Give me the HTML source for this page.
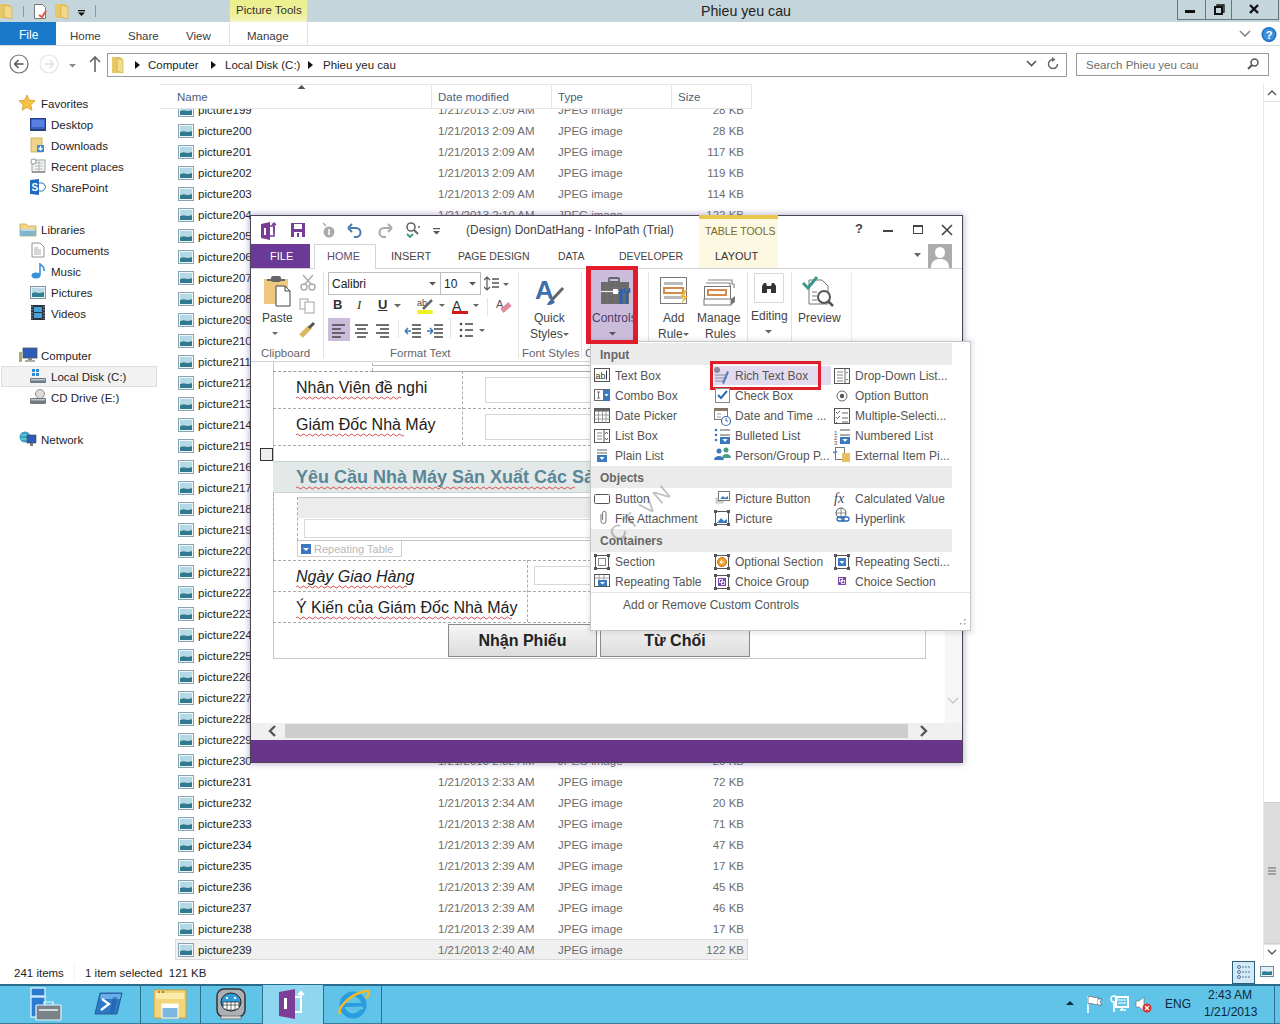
<!DOCTYPE html>
<html><head><meta charset="utf-8">
<style>
*{margin:0;padding:0;box-sizing:border-box}
html,body{width:1280px;height:1024px;overflow:hidden;background:#fff;font-family:"Liberation Sans",sans-serif;font-size:11.5px;color:#1e1e1e}
.a{position:absolute}
.t{position:absolute;white-space:nowrap;line-height:14px}
.row .n{position:absolute;left:198px}
.ico{position:absolute}
</style></head><body>

<!-- title bar -->
<div class="a" style="left:0;top:0;width:1280px;height:22px;background:#c5d5dc"></div>
<!-- QAT icons -->
<svg class="a" style="left:0;top:0" width="100" height="22">
 <path d="M-2 4h10l3 2v12h-13z" fill="#e6c867"/><path d="M4 5l8 2v12l-8-2z" fill="#f2d98a" stroke="#c9a544" stroke-width=".6"/>
 <rect x="23" y="6" width="1" height="11" fill="#8b9aa0"/>
 <path d="M34.5 4.5h8l3 3v11h-11z" fill="#fff" stroke="#777"/><path d="M39 15l3 2 4-6" stroke="#e0583e" stroke-width="2" fill="none"/>
 <path d="M55 4h10l3 2v12h-13z" fill="#e6c867"/><path d="M61 5l7 2v12l-7-2z" fill="#f2d98a" stroke="#c9a544" stroke-width=".6"/>
 <rect x="78" y="10" width="7" height="1.3" fill="#111"/><path d="M78 12.5h7l-3.5 3.5z" fill="#111"/>
 <rect x="95" y="5" width="1" height="12" fill="#8b9aa0"/>
</svg>
<div class="a" style="left:229px;top:0;width:79px;height:22px;background:linear-gradient(#ecef8c,#eef19c 70%,#f3f5c8);border-left:1px solid #d8de9a;border-right:1px solid #d8de9a"></div>
<div class="t" style="left:236px;top:3px;font-size:11.5px;color:#333">Picture Tools</div>
<div class="t" style="left:701px;top:3px;font-size:14.2px;line-height:17px;color:#222">Phieu yeu cau</div>
<!-- window buttons -->
<div class="a" style="left:1177px;top:0;width:102px;height:20px;border:1px solid #66767c;border-top:none;background:#c5d5dc"></div>
<div class="a" style="left:1205px;top:0;width:1px;height:20px;background:#66767c"></div>
<div class="a" style="left:1231px;top:0;width:1px;height:20px;background:#66767c"></div>
<div class="a" style="left:1185px;top:10px;width:10px;height:3px;background:#111"></div>
<svg class="a" style="left:1208px;top:2px" width="22" height="16"><rect x="7" y="5" width="7" height="7" fill="none" stroke="#111" stroke-width="2"/><path d="M9 4V3h7v7h-1" fill="none" stroke="#111" stroke-width="1.3"/></svg>
<svg class="a" style="left:1248px;top:3px" width="20" height="14"><path d="M2 2l8 8M10 2l-8 8" stroke="#111" stroke-width="2.4"/></svg>
<!-- ribbon tab row -->
<div class="a" style="left:0;top:22px;width:1280px;height:24px;background:#fff;border-bottom:1px solid #dadbdc"></div>
<div class="a" style="left:0;top:22px;width:56px;height:23px;background:#1979ca"></div>
<div class="t" style="left:19px;top:28px;font-size:12px;color:#fff">File</div>
<div class="t" style="left:70px;top:29px;color:#3c3c3c">Home</div>
<div class="t" style="left:128px;top:29px;color:#3c3c3c">Share</div>
<div class="t" style="left:186px;top:29px;color:#3c3c3c">View</div>
<div class="a" style="left:229px;top:22px;width:1px;height:23px;background:#e4e4d0"></div>
<div class="a" style="left:307px;top:22px;width:1px;height:23px;background:#e4e4d0"></div>
<div class="t" style="left:247px;top:29px;color:#3c3c3c">Manage</div>
<svg class="a" style="left:1238px;top:28px" width="16" height="12"><path d="M2 3l5 5 5-5" fill="none" stroke="#888" stroke-width="1.6"/></svg>
<svg class="a" style="left:1260px;top:26px" width="18" height="18"><circle cx="9" cy="8.5" r="7.5" fill="#1f6fc1"/><circle cx="9" cy="8.5" r="6" fill="#3c8fdc"/><text x="9" y="13" font-size="11" font-weight="bold" fill="#fff" text-anchor="middle" font-family="Liberation Sans">?</text></svg>
<!-- nav row -->
<svg class="a" style="left:0;top:46px" width="106" height="38">
 <circle cx="19" cy="18" r="9" fill="none" stroke="#707070" stroke-width="1.2"/>
 <path d="M14.5 18h9M14.5 18l4-4M14.5 18l4 4" stroke="#555" stroke-width="1.5" fill="none"/>
 <circle cx="49" cy="18" r="9" fill="none" stroke="#e2e2e2" stroke-width="1.2"/>
 <path d="M44.5 18h9M53.5 18l-4-4M53.5 18l-4 4" stroke="#e0e0e0" stroke-width="1.5" fill="none"/>
 <path d="M69 18h7l-3.5 3.5z" fill="#888"/>
 <path d="M95 26V11M90 16l5-5 5 5" stroke="#666" stroke-width="1.6" fill="none"/>
</svg>
<div class="a" style="left:107px;top:53px;width:960px;height:24px;border:1px solid #9a9a9a;background:#fff"></div>
<svg class="a" style="left:110px;top:55px" width="20" height="20"><path d="M2 2h8l3 2v14h-11z" fill="#e6c867"/><path d="M7 3l6 2v13l-6-2z" fill="#f3dc8e" stroke="#caa64a" stroke-width=".6"/></svg>
<svg class="a" style="left:134px;top:60px" width="8" height="10"><path d="M1 1l5 4-5 4z" fill="#111"/></svg>
<div class="t" style="left:148px;top:58px;color:#1e1e1e">Computer</div>
<svg class="a" style="left:210px;top:60px" width="8" height="10"><path d="M1 1l5 4-5 4z" fill="#111"/></svg>
<div class="t" style="left:225px;top:58px;color:#1e1e1e">Local Disk (C:)</div>
<svg class="a" style="left:307px;top:60px" width="8" height="10"><path d="M1 1l5 4-5 4z" fill="#111"/></svg>
<div class="t" style="left:323px;top:58px;color:#1e1e1e">Phieu yeu cau</div>
<svg class="a" style="left:1025px;top:58px" width="14" height="12"><path d="M2 3l4.5 4.5L11 3" fill="none" stroke="#555" stroke-width="1.6"/></svg>
<svg class="a" style="left:1045px;top:56px" width="16" height="16"><path d="M12.5 8A4.5 4.5 0 1 1 8 3.5" fill="none" stroke="#666" stroke-width="1.5"/><path d="M7 1l3.5 2.5L7 6z" fill="#666"/></svg>
<div class="a" style="left:1076px;top:53px;width:193px;height:23px;border:1px solid #9a9a9a;background:#fff"></div>
<div class="t" style="left:1086px;top:58px;color:#6d6d6d">Search Phieu yeu cau</div>
<svg class="a" style="left:1246px;top:57px" width="14" height="14"><circle cx="8.5" cy="5.5" r="3.5" fill="none" stroke="#555" stroke-width="1.5"/><path d="M6 8l-4 4" stroke="#555" stroke-width="2"/></svg>
<!-- nav pane -->
<svg class="a" style="left:18px;top:94px" width="20" height="20"><path d="M9 1l2.4 5.2 5.6.6-4.2 3.8 1.2 5.6L9 13.3l-5 2.9 1.2-5.6L1 6.8l5.6-.6z" fill="#f5c242" stroke="#d49a2a" stroke-width=".8"/></svg>
<div class="t" style="left:41px;top:97px">Favorites</div>
<svg class="a" style="left:30px;top:118px" width="16" height="14"><rect x="0.5" y="0.5" width="15" height="11" fill="#3d63c8" stroke="#1f3d8c"/><rect x="2" y="2" width="12" height="7" fill="#5880e0"/><rect x="0" y="11" width="16" height="2" fill="#26407a"/></svg>
<div class="t" style="left:51px;top:118px">Desktop</div>
<svg class="a" style="left:30px;top:137px" width="16" height="16"><rect x="1" y="1" width="11" height="14" fill="#eed58a" stroke="#c9a949" stroke-width=".8"/><path d="M7 8h7v7H7z" fill="#3a8bd4"/><path d="M10.5 9v4M8.5 11l2 2 2-2" stroke="#fff" stroke-width="1.2" fill="none"/></svg>
<div class="t" style="left:51px;top:139px">Downloads</div>
<svg class="a" style="left:30px;top:158px" width="16" height="16"><rect x="2" y="2" width="13" height="12" fill="#f4f4f4" stroke="#8b8b8b" stroke-width=".8"/><path d="M5 5h8M5 8h8M5 11h8M9 3v10" stroke="#9aa" stroke-width=".7"/><circle cx="3.5" cy="3.5" r="2.6" fill="#fff" stroke="#777" stroke-width=".8"/><rect x="2" y="13" width="13" height="2" fill="#999"/></svg>
<div class="t" style="left:51px;top:160px">Recent places</div>
<svg class="a" style="left:30px;top:179px" width="16" height="16"><path d="M0 1l9-1v16l-9-1z" fill="#1d6bbd"/><path d="M9 4h4l3 4-3 4H9" fill="#fff" stroke="#2b78c2" stroke-width="1"/><text x="1.5" y="12" font-size="10" font-weight="bold" fill="#fff" font-family="Liberation Sans">S</text></svg>
<div class="t" style="left:51px;top:181px">SharePoint</div>
<svg class="a" style="left:19px;top:221px" width="18" height="16"><path d="M1 3h6l2 2h8v10H1z" fill="#f3d488" stroke="#c9a949" stroke-width=".8"/><path d="M1 8h16v7H1z" fill="#80b4c8"/><path d="M2 9h14" stroke="#fff" stroke-width="1"/></svg>
<div class="t" style="left:41px;top:223px">Libraries</div>
<svg class="a" style="left:31px;top:242px" width="14" height="16"><path d="M1 1h8l4 4v10H1z" fill="#fff" stroke="#888" stroke-width=".9"/><path d="M3 6h4M3 8h7M3 10h7M3 12h7" stroke="#9a9a9a" stroke-width=".8"/></svg>
<div class="t" style="left:51px;top:244px">Documents</div>
<svg class="a" style="left:30px;top:263px" width="16" height="16"><ellipse cx="6" cy="12.5" rx="4.5" ry="3" fill="#3b8fd8"/><path d="M10 12V1c2 2 5 3 4 7" stroke="#3b8fd8" stroke-width="1.6" fill="none"/></svg>
<div class="t" style="left:51px;top:265px">Music</div>
<svg class="a" style="left:30px;top:286px" width="16" height="14"><rect x=".5" y=".5" width="15" height="12" fill="#e8f2f6" stroke="#7c98a8"/><path d="M2 11V7c3-2 6 1 12-1v5z" fill="#2f7f95"/><rect x="2" y="2" width="12" height="4" fill="#b9dbe8"/></svg>
<div class="t" style="left:51px;top:286px">Pictures</div>
<svg class="a" style="left:31px;top:305px" width="14" height="16"><rect x="0" y="0" width="14" height="15" fill="#2b3340"/><rect x="3" y="2" width="8" height="5" fill="#4aa0d8"/><rect x="3" y="8" width="8" height="5" fill="#4aa0d8"/><path d="M1 1v13M13 1v13" stroke="#aaa" stroke-width="1" stroke-dasharray="1.5 1.5"/></svg>
<div class="t" style="left:51px;top:307px">Videos</div>
<svg class="a" style="left:19px;top:347px" width="20" height="16"><rect x="4" y="1" width="14" height="10" fill="#2a5cb8" stroke="#555" stroke-width=".8"/><rect x="9" y="11" width="4" height="2" fill="#888"/><rect x="6" y="13" width="10" height="2" fill="#aaa"/><rect x="0" y="5" width="3" height="10" fill="#9fb26a"/></svg>
<div class="t" style="left:41px;top:349px">Computer</div>
<div class="a" style="left:1px;top:366px;width:156px;height:21px;background:#f2f2f2;border:1px solid #dedede"></div>
<svg class="a" style="left:30px;top:368px" width="16" height="16"><rect x="2" y="1" width="3" height="3" fill="#2f8ad0"/><rect x="6" y="1" width="3" height="3" fill="#2f8ad0"/><rect x="2" y="5" width="3" height="3" fill="#2f8ad0"/><rect x="6" y="5" width="3" height="3" fill="#2f8ad0"/><rect x="0" y="10" width="16" height="5" rx="1" fill="#6d7b86"/><rect x="1" y="11" width="14" height="1.5" fill="#bcc6cc"/></svg>
<div class="t" style="left:51px;top:370px">Local Disk (C:)</div>
<svg class="a" style="left:30px;top:389px" width="16" height="16"><circle cx="10" cy="5" r="4.5" fill="#ddd" stroke="#777" stroke-width=".8"/><rect x="0" y="9" width="16" height="6" rx="1" fill="#707a80"/><rect x="1" y="10" width="14" height="1.5" fill="#c0c6ca"/></svg>
<div class="t" style="left:51px;top:391px">CD Drive (E:)</div>
<svg class="a" style="left:19px;top:431px" width="20" height="16"><circle cx="6" cy="6" r="5.5" fill="#3aa0c8"/><path d="M2 4h8M2 8h8" stroke="#8fd" stroke-width=".8"/><rect x="8" y="4" width="9" height="8" fill="#2a5cb8" stroke="#444" stroke-width=".6"/><rect x="11" y="12" width="3" height="3" fill="#777"/></svg>
<div class="t" style="left:41px;top:433px">Network</div>
<!-- vscroll -->
<div class="a" style="left:1263px;top:84px;width:17px;height:876px;background:#fff;border-left:1px solid #e8e8e8"></div>
<svg class="a" style="left:1264px;top:86px" width="16" height="14"><path d="M4 9l4-4 4 4" fill="none" stroke="#555" stroke-width="1.4"/></svg>
<div class="a" style="left:1264px;top:101px;width:16px;height:1px;background:#e2e2e2"></div>
<div class="a" style="left:1264px;top:802px;width:16px;height:142px;background:#dcdcdc;border-top:1px solid #cfcfcf;border-bottom:1px solid #cfcfcf"></div>
<svg class="a" style="left:1264px;top:866px" width="16" height="12"><path d="M4 2h8M4 5h8M4 8h8" stroke="#666" stroke-width="1.2"/></svg>
<div class="a" style="left:1264px;top:944px;width:16px;height:1px;background:#e2e2e2"></div>
<svg class="a" style="left:1264px;top:944px" width="16" height="16"><path d="M4 6l4 4 4-4" fill="none" stroke="#555" stroke-width="1.4"/></svg>
<!-- status bar -->
<div class="t" style="left:14px;top:966px;color:#1e1e1e">241 items</div>
<div class="a" style="left:74px;top:964px;width:1px;height:16px;background:#f2f2f2"></div>
<div class="t" style="left:85px;top:966px;color:#1e1e1e">1 item selected&nbsp; 121 KB</div>
<div class="a" style="left:1232px;top:961px;width:23px;height:23px;background:#d3e9f8;border:1px solid #2f607c"></div>
<svg class="a" style="left:1234px;top:963px" width="20" height="18"><g stroke="#5a7896" stroke-width="1" fill="none"><circle cx="5" cy="4" r="1.5"/><circle cx="5" cy="9" r="1.5"/><circle cx="5" cy="14" r="1.5"/></g><path d="M8 4h9M8 9h9M8 14h9" stroke="#5a7896" stroke-width="1" stroke-dasharray="2 1"/></svg>
<svg class="a" style="left:1258px;top:964px" width="18" height="16"><rect x="2.5" y="2.5" width="13" height="10" fill="#e4f0f6" stroke="#6f8a9a"/><path d="M4 11V8c3-2 6 1 10-1v4z" fill="#2d7d94"/></svg>

<svg class="a" style="left:178px;top:103px" width="16" height="14"><rect x=".5" y=".5" width="15" height="13" fill="#eef6f9" stroke="#8aa3b0"/><rect x="2" y="2" width="12" height="5" fill="#b4d9e6"/><path d="M2 12V8c4-2 7 1 12-1v5z" fill="#2f7a8f"/></svg>
<div class="t" style="left:198px;top:103px">picture199</div>
<div class="t" style="left:438px;top:103px;color:#6d6d6d">1/21/2013 2:09 AM</div>
<div class="t" style="left:558px;top:103px;color:#6d6d6d">JPEG image</div>
<div class="t" style="left:664px;width:80px;text-align:right;top:103px;color:#6d6d6d">28 KB</div>
<svg class="a" style="left:178px;top:124px" width="16" height="14"><rect x=".5" y=".5" width="15" height="13" fill="#eef6f9" stroke="#8aa3b0"/><rect x="2" y="2" width="12" height="5" fill="#b4d9e6"/><path d="M2 12V8c4-2 7 1 12-1v5z" fill="#2f7a8f"/></svg>
<div class="t" style="left:198px;top:124px">picture200</div>
<div class="t" style="left:438px;top:124px;color:#6d6d6d">1/21/2013 2:09 AM</div>
<div class="t" style="left:558px;top:124px;color:#6d6d6d">JPEG image</div>
<div class="t" style="left:664px;width:80px;text-align:right;top:124px;color:#6d6d6d">28 KB</div>
<svg class="a" style="left:178px;top:145px" width="16" height="14"><rect x=".5" y=".5" width="15" height="13" fill="#eef6f9" stroke="#8aa3b0"/><rect x="2" y="2" width="12" height="5" fill="#b4d9e6"/><path d="M2 12V8c4-2 7 1 12-1v5z" fill="#2f7a8f"/></svg>
<div class="t" style="left:198px;top:145px">picture201</div>
<div class="t" style="left:438px;top:145px;color:#6d6d6d">1/21/2013 2:09 AM</div>
<div class="t" style="left:558px;top:145px;color:#6d6d6d">JPEG image</div>
<div class="t" style="left:664px;width:80px;text-align:right;top:145px;color:#6d6d6d">117 KB</div>
<svg class="a" style="left:178px;top:166px" width="16" height="14"><rect x=".5" y=".5" width="15" height="13" fill="#eef6f9" stroke="#8aa3b0"/><rect x="2" y="2" width="12" height="5" fill="#b4d9e6"/><path d="M2 12V8c4-2 7 1 12-1v5z" fill="#2f7a8f"/></svg>
<div class="t" style="left:198px;top:166px">picture202</div>
<div class="t" style="left:438px;top:166px;color:#6d6d6d">1/21/2013 2:09 AM</div>
<div class="t" style="left:558px;top:166px;color:#6d6d6d">JPEG image</div>
<div class="t" style="left:664px;width:80px;text-align:right;top:166px;color:#6d6d6d">119 KB</div>
<svg class="a" style="left:178px;top:187px" width="16" height="14"><rect x=".5" y=".5" width="15" height="13" fill="#eef6f9" stroke="#8aa3b0"/><rect x="2" y="2" width="12" height="5" fill="#b4d9e6"/><path d="M2 12V8c4-2 7 1 12-1v5z" fill="#2f7a8f"/></svg>
<div class="t" style="left:198px;top:187px">picture203</div>
<div class="t" style="left:438px;top:187px;color:#6d6d6d">1/21/2013 2:09 AM</div>
<div class="t" style="left:558px;top:187px;color:#6d6d6d">JPEG image</div>
<div class="t" style="left:664px;width:80px;text-align:right;top:187px;color:#6d6d6d">114 KB</div>
<svg class="a" style="left:178px;top:208px" width="16" height="14"><rect x=".5" y=".5" width="15" height="13" fill="#eef6f9" stroke="#8aa3b0"/><rect x="2" y="2" width="12" height="5" fill="#b4d9e6"/><path d="M2 12V8c4-2 7 1 12-1v5z" fill="#2f7a8f"/></svg>
<div class="t" style="left:198px;top:208px">picture204</div>
<div class="t" style="left:438px;top:208px;color:#6d6d6d">1/21/2013 2:10 AM</div>
<div class="t" style="left:558px;top:208px;color:#6d6d6d">JPEG image</div>
<div class="t" style="left:664px;width:80px;text-align:right;top:208px;color:#6d6d6d">122 KB</div>
<svg class="a" style="left:178px;top:229px" width="16" height="14"><rect x=".5" y=".5" width="15" height="13" fill="#eef6f9" stroke="#8aa3b0"/><rect x="2" y="2" width="12" height="5" fill="#b4d9e6"/><path d="M2 12V8c4-2 7 1 12-1v5z" fill="#2f7a8f"/></svg>
<div class="t" style="left:198px;top:229px">picture205</div>
<div class="t" style="left:438px;top:229px;color:#6d6d6d">1/21/2013 2:15 AM</div>
<div class="t" style="left:558px;top:229px;color:#6d6d6d">JPEG image</div>
<div class="t" style="left:664px;width:80px;text-align:right;top:229px;color:#6d6d6d">50 KB</div>
<svg class="a" style="left:178px;top:250px" width="16" height="14"><rect x=".5" y=".5" width="15" height="13" fill="#eef6f9" stroke="#8aa3b0"/><rect x="2" y="2" width="12" height="5" fill="#b4d9e6"/><path d="M2 12V8c4-2 7 1 12-1v5z" fill="#2f7a8f"/></svg>
<div class="t" style="left:198px;top:250px">picture206</div>
<div class="t" style="left:438px;top:250px;color:#6d6d6d">1/21/2013 2:16 AM</div>
<div class="t" style="left:558px;top:250px;color:#6d6d6d">JPEG image</div>
<div class="t" style="left:664px;width:80px;text-align:right;top:250px;color:#6d6d6d">50 KB</div>
<svg class="a" style="left:178px;top:271px" width="16" height="14"><rect x=".5" y=".5" width="15" height="13" fill="#eef6f9" stroke="#8aa3b0"/><rect x="2" y="2" width="12" height="5" fill="#b4d9e6"/><path d="M2 12V8c4-2 7 1 12-1v5z" fill="#2f7a8f"/></svg>
<div class="t" style="left:198px;top:271px">picture207</div>
<div class="t" style="left:438px;top:271px;color:#6d6d6d">1/21/2013 2:17 AM</div>
<div class="t" style="left:558px;top:271px;color:#6d6d6d">JPEG image</div>
<div class="t" style="left:664px;width:80px;text-align:right;top:271px;color:#6d6d6d">50 KB</div>
<svg class="a" style="left:178px;top:292px" width="16" height="14"><rect x=".5" y=".5" width="15" height="13" fill="#eef6f9" stroke="#8aa3b0"/><rect x="2" y="2" width="12" height="5" fill="#b4d9e6"/><path d="M2 12V8c4-2 7 1 12-1v5z" fill="#2f7a8f"/></svg>
<div class="t" style="left:198px;top:292px">picture208</div>
<div class="t" style="left:438px;top:292px;color:#6d6d6d">1/21/2013 2:18 AM</div>
<div class="t" style="left:558px;top:292px;color:#6d6d6d">JPEG image</div>
<div class="t" style="left:664px;width:80px;text-align:right;top:292px;color:#6d6d6d">50 KB</div>
<svg class="a" style="left:178px;top:313px" width="16" height="14"><rect x=".5" y=".5" width="15" height="13" fill="#eef6f9" stroke="#8aa3b0"/><rect x="2" y="2" width="12" height="5" fill="#b4d9e6"/><path d="M2 12V8c4-2 7 1 12-1v5z" fill="#2f7a8f"/></svg>
<div class="t" style="left:198px;top:313px">picture209</div>
<div class="t" style="left:438px;top:313px;color:#6d6d6d">1/21/2013 2:19 AM</div>
<div class="t" style="left:558px;top:313px;color:#6d6d6d">JPEG image</div>
<div class="t" style="left:664px;width:80px;text-align:right;top:313px;color:#6d6d6d">50 KB</div>
<svg class="a" style="left:178px;top:334px" width="16" height="14"><rect x=".5" y=".5" width="15" height="13" fill="#eef6f9" stroke="#8aa3b0"/><rect x="2" y="2" width="12" height="5" fill="#b4d9e6"/><path d="M2 12V8c4-2 7 1 12-1v5z" fill="#2f7a8f"/></svg>
<div class="t" style="left:198px;top:334px">picture210</div>
<div class="t" style="left:438px;top:334px;color:#6d6d6d">1/21/2013 2:10 AM</div>
<div class="t" style="left:558px;top:334px;color:#6d6d6d">JPEG image</div>
<div class="t" style="left:664px;width:80px;text-align:right;top:334px;color:#6d6d6d">50 KB</div>
<svg class="a" style="left:178px;top:355px" width="16" height="14"><rect x=".5" y=".5" width="15" height="13" fill="#eef6f9" stroke="#8aa3b0"/><rect x="2" y="2" width="12" height="5" fill="#b4d9e6"/><path d="M2 12V8c4-2 7 1 12-1v5z" fill="#2f7a8f"/></svg>
<div class="t" style="left:198px;top:355px">picture211</div>
<div class="t" style="left:438px;top:355px;color:#6d6d6d">1/21/2013 2:11 AM</div>
<div class="t" style="left:558px;top:355px;color:#6d6d6d">JPEG image</div>
<div class="t" style="left:664px;width:80px;text-align:right;top:355px;color:#6d6d6d">50 KB</div>
<svg class="a" style="left:178px;top:376px" width="16" height="14"><rect x=".5" y=".5" width="15" height="13" fill="#eef6f9" stroke="#8aa3b0"/><rect x="2" y="2" width="12" height="5" fill="#b4d9e6"/><path d="M2 12V8c4-2 7 1 12-1v5z" fill="#2f7a8f"/></svg>
<div class="t" style="left:198px;top:376px">picture212</div>
<div class="t" style="left:438px;top:376px;color:#6d6d6d">1/21/2013 2:12 AM</div>
<div class="t" style="left:558px;top:376px;color:#6d6d6d">JPEG image</div>
<div class="t" style="left:664px;width:80px;text-align:right;top:376px;color:#6d6d6d">50 KB</div>
<svg class="a" style="left:178px;top:397px" width="16" height="14"><rect x=".5" y=".5" width="15" height="13" fill="#eef6f9" stroke="#8aa3b0"/><rect x="2" y="2" width="12" height="5" fill="#b4d9e6"/><path d="M2 12V8c4-2 7 1 12-1v5z" fill="#2f7a8f"/></svg>
<div class="t" style="left:198px;top:397px">picture213</div>
<div class="t" style="left:438px;top:397px;color:#6d6d6d">1/21/2013 2:13 AM</div>
<div class="t" style="left:558px;top:397px;color:#6d6d6d">JPEG image</div>
<div class="t" style="left:664px;width:80px;text-align:right;top:397px;color:#6d6d6d">50 KB</div>
<svg class="a" style="left:178px;top:418px" width="16" height="14"><rect x=".5" y=".5" width="15" height="13" fill="#eef6f9" stroke="#8aa3b0"/><rect x="2" y="2" width="12" height="5" fill="#b4d9e6"/><path d="M2 12V8c4-2 7 1 12-1v5z" fill="#2f7a8f"/></svg>
<div class="t" style="left:198px;top:418px">picture214</div>
<div class="t" style="left:438px;top:418px;color:#6d6d6d">1/21/2013 2:14 AM</div>
<div class="t" style="left:558px;top:418px;color:#6d6d6d">JPEG image</div>
<div class="t" style="left:664px;width:80px;text-align:right;top:418px;color:#6d6d6d">50 KB</div>
<svg class="a" style="left:178px;top:439px" width="16" height="14"><rect x=".5" y=".5" width="15" height="13" fill="#eef6f9" stroke="#8aa3b0"/><rect x="2" y="2" width="12" height="5" fill="#b4d9e6"/><path d="M2 12V8c4-2 7 1 12-1v5z" fill="#2f7a8f"/></svg>
<div class="t" style="left:198px;top:439px">picture215</div>
<div class="t" style="left:438px;top:439px;color:#6d6d6d">1/21/2013 2:15 AM</div>
<div class="t" style="left:558px;top:439px;color:#6d6d6d">JPEG image</div>
<div class="t" style="left:664px;width:80px;text-align:right;top:439px;color:#6d6d6d">50 KB</div>
<svg class="a" style="left:178px;top:460px" width="16" height="14"><rect x=".5" y=".5" width="15" height="13" fill="#eef6f9" stroke="#8aa3b0"/><rect x="2" y="2" width="12" height="5" fill="#b4d9e6"/><path d="M2 12V8c4-2 7 1 12-1v5z" fill="#2f7a8f"/></svg>
<div class="t" style="left:198px;top:460px">picture216</div>
<div class="t" style="left:438px;top:460px;color:#6d6d6d">1/21/2013 2:16 AM</div>
<div class="t" style="left:558px;top:460px;color:#6d6d6d">JPEG image</div>
<div class="t" style="left:664px;width:80px;text-align:right;top:460px;color:#6d6d6d">50 KB</div>
<svg class="a" style="left:178px;top:481px" width="16" height="14"><rect x=".5" y=".5" width="15" height="13" fill="#eef6f9" stroke="#8aa3b0"/><rect x="2" y="2" width="12" height="5" fill="#b4d9e6"/><path d="M2 12V8c4-2 7 1 12-1v5z" fill="#2f7a8f"/></svg>
<div class="t" style="left:198px;top:481px">picture217</div>
<div class="t" style="left:438px;top:481px;color:#6d6d6d">1/21/2013 2:17 AM</div>
<div class="t" style="left:558px;top:481px;color:#6d6d6d">JPEG image</div>
<div class="t" style="left:664px;width:80px;text-align:right;top:481px;color:#6d6d6d">50 KB</div>
<svg class="a" style="left:178px;top:502px" width="16" height="14"><rect x=".5" y=".5" width="15" height="13" fill="#eef6f9" stroke="#8aa3b0"/><rect x="2" y="2" width="12" height="5" fill="#b4d9e6"/><path d="M2 12V8c4-2 7 1 12-1v5z" fill="#2f7a8f"/></svg>
<div class="t" style="left:198px;top:502px">picture218</div>
<div class="t" style="left:438px;top:502px;color:#6d6d6d">1/21/2013 2:18 AM</div>
<div class="t" style="left:558px;top:502px;color:#6d6d6d">JPEG image</div>
<div class="t" style="left:664px;width:80px;text-align:right;top:502px;color:#6d6d6d">50 KB</div>
<svg class="a" style="left:178px;top:523px" width="16" height="14"><rect x=".5" y=".5" width="15" height="13" fill="#eef6f9" stroke="#8aa3b0"/><rect x="2" y="2" width="12" height="5" fill="#b4d9e6"/><path d="M2 12V8c4-2 7 1 12-1v5z" fill="#2f7a8f"/></svg>
<div class="t" style="left:198px;top:523px">picture219</div>
<div class="t" style="left:438px;top:523px;color:#6d6d6d">1/21/2013 2:19 AM</div>
<div class="t" style="left:558px;top:523px;color:#6d6d6d">JPEG image</div>
<div class="t" style="left:664px;width:80px;text-align:right;top:523px;color:#6d6d6d">50 KB</div>
<svg class="a" style="left:178px;top:544px" width="16" height="14"><rect x=".5" y=".5" width="15" height="13" fill="#eef6f9" stroke="#8aa3b0"/><rect x="2" y="2" width="12" height="5" fill="#b4d9e6"/><path d="M2 12V8c4-2 7 1 12-1v5z" fill="#2f7a8f"/></svg>
<div class="t" style="left:198px;top:544px">picture220</div>
<div class="t" style="left:438px;top:544px;color:#6d6d6d">1/21/2013 2:10 AM</div>
<div class="t" style="left:558px;top:544px;color:#6d6d6d">JPEG image</div>
<div class="t" style="left:664px;width:80px;text-align:right;top:544px;color:#6d6d6d">50 KB</div>
<svg class="a" style="left:178px;top:565px" width="16" height="14"><rect x=".5" y=".5" width="15" height="13" fill="#eef6f9" stroke="#8aa3b0"/><rect x="2" y="2" width="12" height="5" fill="#b4d9e6"/><path d="M2 12V8c4-2 7 1 12-1v5z" fill="#2f7a8f"/></svg>
<div class="t" style="left:198px;top:565px">picture221</div>
<div class="t" style="left:438px;top:565px;color:#6d6d6d">1/21/2013 2:11 AM</div>
<div class="t" style="left:558px;top:565px;color:#6d6d6d">JPEG image</div>
<div class="t" style="left:664px;width:80px;text-align:right;top:565px;color:#6d6d6d">50 KB</div>
<svg class="a" style="left:178px;top:586px" width="16" height="14"><rect x=".5" y=".5" width="15" height="13" fill="#eef6f9" stroke="#8aa3b0"/><rect x="2" y="2" width="12" height="5" fill="#b4d9e6"/><path d="M2 12V8c4-2 7 1 12-1v5z" fill="#2f7a8f"/></svg>
<div class="t" style="left:198px;top:586px">picture222</div>
<div class="t" style="left:438px;top:586px;color:#6d6d6d">1/21/2013 2:12 AM</div>
<div class="t" style="left:558px;top:586px;color:#6d6d6d">JPEG image</div>
<div class="t" style="left:664px;width:80px;text-align:right;top:586px;color:#6d6d6d">50 KB</div>
<svg class="a" style="left:178px;top:607px" width="16" height="14"><rect x=".5" y=".5" width="15" height="13" fill="#eef6f9" stroke="#8aa3b0"/><rect x="2" y="2" width="12" height="5" fill="#b4d9e6"/><path d="M2 12V8c4-2 7 1 12-1v5z" fill="#2f7a8f"/></svg>
<div class="t" style="left:198px;top:607px">picture223</div>
<div class="t" style="left:438px;top:607px;color:#6d6d6d">1/21/2013 2:13 AM</div>
<div class="t" style="left:558px;top:607px;color:#6d6d6d">JPEG image</div>
<div class="t" style="left:664px;width:80px;text-align:right;top:607px;color:#6d6d6d">50 KB</div>
<svg class="a" style="left:178px;top:628px" width="16" height="14"><rect x=".5" y=".5" width="15" height="13" fill="#eef6f9" stroke="#8aa3b0"/><rect x="2" y="2" width="12" height="5" fill="#b4d9e6"/><path d="M2 12V8c4-2 7 1 12-1v5z" fill="#2f7a8f"/></svg>
<div class="t" style="left:198px;top:628px">picture224</div>
<div class="t" style="left:438px;top:628px;color:#6d6d6d">1/21/2013 2:14 AM</div>
<div class="t" style="left:558px;top:628px;color:#6d6d6d">JPEG image</div>
<div class="t" style="left:664px;width:80px;text-align:right;top:628px;color:#6d6d6d">50 KB</div>
<svg class="a" style="left:178px;top:649px" width="16" height="14"><rect x=".5" y=".5" width="15" height="13" fill="#eef6f9" stroke="#8aa3b0"/><rect x="2" y="2" width="12" height="5" fill="#b4d9e6"/><path d="M2 12V8c4-2 7 1 12-1v5z" fill="#2f7a8f"/></svg>
<div class="t" style="left:198px;top:649px">picture225</div>
<div class="t" style="left:438px;top:649px;color:#6d6d6d">1/21/2013 2:15 AM</div>
<div class="t" style="left:558px;top:649px;color:#6d6d6d">JPEG image</div>
<div class="t" style="left:664px;width:80px;text-align:right;top:649px;color:#6d6d6d">50 KB</div>
<svg class="a" style="left:178px;top:670px" width="16" height="14"><rect x=".5" y=".5" width="15" height="13" fill="#eef6f9" stroke="#8aa3b0"/><rect x="2" y="2" width="12" height="5" fill="#b4d9e6"/><path d="M2 12V8c4-2 7 1 12-1v5z" fill="#2f7a8f"/></svg>
<div class="t" style="left:198px;top:670px">picture226</div>
<div class="t" style="left:438px;top:670px;color:#6d6d6d">1/21/2013 2:16 AM</div>
<div class="t" style="left:558px;top:670px;color:#6d6d6d">JPEG image</div>
<div class="t" style="left:664px;width:80px;text-align:right;top:670px;color:#6d6d6d">50 KB</div>
<svg class="a" style="left:178px;top:691px" width="16" height="14"><rect x=".5" y=".5" width="15" height="13" fill="#eef6f9" stroke="#8aa3b0"/><rect x="2" y="2" width="12" height="5" fill="#b4d9e6"/><path d="M2 12V8c4-2 7 1 12-1v5z" fill="#2f7a8f"/></svg>
<div class="t" style="left:198px;top:691px">picture227</div>
<div class="t" style="left:438px;top:691px;color:#6d6d6d">1/21/2013 2:17 AM</div>
<div class="t" style="left:558px;top:691px;color:#6d6d6d">JPEG image</div>
<div class="t" style="left:664px;width:80px;text-align:right;top:691px;color:#6d6d6d">50 KB</div>
<svg class="a" style="left:178px;top:712px" width="16" height="14"><rect x=".5" y=".5" width="15" height="13" fill="#eef6f9" stroke="#8aa3b0"/><rect x="2" y="2" width="12" height="5" fill="#b4d9e6"/><path d="M2 12V8c4-2 7 1 12-1v5z" fill="#2f7a8f"/></svg>
<div class="t" style="left:198px;top:712px">picture228</div>
<div class="t" style="left:438px;top:712px;color:#6d6d6d">1/21/2013 2:18 AM</div>
<div class="t" style="left:558px;top:712px;color:#6d6d6d">JPEG image</div>
<div class="t" style="left:664px;width:80px;text-align:right;top:712px;color:#6d6d6d">50 KB</div>
<svg class="a" style="left:178px;top:733px" width="16" height="14"><rect x=".5" y=".5" width="15" height="13" fill="#eef6f9" stroke="#8aa3b0"/><rect x="2" y="2" width="12" height="5" fill="#b4d9e6"/><path d="M2 12V8c4-2 7 1 12-1v5z" fill="#2f7a8f"/></svg>
<div class="t" style="left:198px;top:733px">picture229</div>
<div class="t" style="left:438px;top:733px;color:#6d6d6d">1/21/2013 2:19 AM</div>
<div class="t" style="left:558px;top:733px;color:#6d6d6d">JPEG image</div>
<div class="t" style="left:664px;width:80px;text-align:right;top:733px;color:#6d6d6d">50 KB</div>
<svg class="a" style="left:178px;top:754px" width="16" height="14"><rect x=".5" y=".5" width="15" height="13" fill="#eef6f9" stroke="#8aa3b0"/><rect x="2" y="2" width="12" height="5" fill="#b4d9e6"/><path d="M2 12V8c4-2 7 1 12-1v5z" fill="#2f7a8f"/></svg>
<div class="t" style="left:198px;top:754px">picture230</div>
<div class="t" style="left:438px;top:754px;color:#6d6d6d">1/21/2013 2:32 AM</div>
<div class="t" style="left:558px;top:754px;color:#6d6d6d">JPEG image</div>
<div class="t" style="left:664px;width:80px;text-align:right;top:754px;color:#6d6d6d">20 KB</div>
<svg class="a" style="left:178px;top:775px" width="16" height="14"><rect x=".5" y=".5" width="15" height="13" fill="#eef6f9" stroke="#8aa3b0"/><rect x="2" y="2" width="12" height="5" fill="#b4d9e6"/><path d="M2 12V8c4-2 7 1 12-1v5z" fill="#2f7a8f"/></svg>
<div class="t" style="left:198px;top:775px">picture231</div>
<div class="t" style="left:438px;top:775px;color:#6d6d6d">1/21/2013 2:33 AM</div>
<div class="t" style="left:558px;top:775px;color:#6d6d6d">JPEG image</div>
<div class="t" style="left:664px;width:80px;text-align:right;top:775px;color:#6d6d6d">72 KB</div>
<svg class="a" style="left:178px;top:796px" width="16" height="14"><rect x=".5" y=".5" width="15" height="13" fill="#eef6f9" stroke="#8aa3b0"/><rect x="2" y="2" width="12" height="5" fill="#b4d9e6"/><path d="M2 12V8c4-2 7 1 12-1v5z" fill="#2f7a8f"/></svg>
<div class="t" style="left:198px;top:796px">picture232</div>
<div class="t" style="left:438px;top:796px;color:#6d6d6d">1/21/2013 2:34 AM</div>
<div class="t" style="left:558px;top:796px;color:#6d6d6d">JPEG image</div>
<div class="t" style="left:664px;width:80px;text-align:right;top:796px;color:#6d6d6d">20 KB</div>
<svg class="a" style="left:178px;top:817px" width="16" height="14"><rect x=".5" y=".5" width="15" height="13" fill="#eef6f9" stroke="#8aa3b0"/><rect x="2" y="2" width="12" height="5" fill="#b4d9e6"/><path d="M2 12V8c4-2 7 1 12-1v5z" fill="#2f7a8f"/></svg>
<div class="t" style="left:198px;top:817px">picture233</div>
<div class="t" style="left:438px;top:817px;color:#6d6d6d">1/21/2013 2:38 AM</div>
<div class="t" style="left:558px;top:817px;color:#6d6d6d">JPEG image</div>
<div class="t" style="left:664px;width:80px;text-align:right;top:817px;color:#6d6d6d">71 KB</div>
<svg class="a" style="left:178px;top:838px" width="16" height="14"><rect x=".5" y=".5" width="15" height="13" fill="#eef6f9" stroke="#8aa3b0"/><rect x="2" y="2" width="12" height="5" fill="#b4d9e6"/><path d="M2 12V8c4-2 7 1 12-1v5z" fill="#2f7a8f"/></svg>
<div class="t" style="left:198px;top:838px">picture234</div>
<div class="t" style="left:438px;top:838px;color:#6d6d6d">1/21/2013 2:39 AM</div>
<div class="t" style="left:558px;top:838px;color:#6d6d6d">JPEG image</div>
<div class="t" style="left:664px;width:80px;text-align:right;top:838px;color:#6d6d6d">47 KB</div>
<svg class="a" style="left:178px;top:859px" width="16" height="14"><rect x=".5" y=".5" width="15" height="13" fill="#eef6f9" stroke="#8aa3b0"/><rect x="2" y="2" width="12" height="5" fill="#b4d9e6"/><path d="M2 12V8c4-2 7 1 12-1v5z" fill="#2f7a8f"/></svg>
<div class="t" style="left:198px;top:859px">picture235</div>
<div class="t" style="left:438px;top:859px;color:#6d6d6d">1/21/2013 2:39 AM</div>
<div class="t" style="left:558px;top:859px;color:#6d6d6d">JPEG image</div>
<div class="t" style="left:664px;width:80px;text-align:right;top:859px;color:#6d6d6d">17 KB</div>
<svg class="a" style="left:178px;top:880px" width="16" height="14"><rect x=".5" y=".5" width="15" height="13" fill="#eef6f9" stroke="#8aa3b0"/><rect x="2" y="2" width="12" height="5" fill="#b4d9e6"/><path d="M2 12V8c4-2 7 1 12-1v5z" fill="#2f7a8f"/></svg>
<div class="t" style="left:198px;top:880px">picture236</div>
<div class="t" style="left:438px;top:880px;color:#6d6d6d">1/21/2013 2:39 AM</div>
<div class="t" style="left:558px;top:880px;color:#6d6d6d">JPEG image</div>
<div class="t" style="left:664px;width:80px;text-align:right;top:880px;color:#6d6d6d">45 KB</div>
<svg class="a" style="left:178px;top:901px" width="16" height="14"><rect x=".5" y=".5" width="15" height="13" fill="#eef6f9" stroke="#8aa3b0"/><rect x="2" y="2" width="12" height="5" fill="#b4d9e6"/><path d="M2 12V8c4-2 7 1 12-1v5z" fill="#2f7a8f"/></svg>
<div class="t" style="left:198px;top:901px">picture237</div>
<div class="t" style="left:438px;top:901px;color:#6d6d6d">1/21/2013 2:39 AM</div>
<div class="t" style="left:558px;top:901px;color:#6d6d6d">JPEG image</div>
<div class="t" style="left:664px;width:80px;text-align:right;top:901px;color:#6d6d6d">46 KB</div>
<svg class="a" style="left:178px;top:922px" width="16" height="14"><rect x=".5" y=".5" width="15" height="13" fill="#eef6f9" stroke="#8aa3b0"/><rect x="2" y="2" width="12" height="5" fill="#b4d9e6"/><path d="M2 12V8c4-2 7 1 12-1v5z" fill="#2f7a8f"/></svg>
<div class="t" style="left:198px;top:922px">picture238</div>
<div class="t" style="left:438px;top:922px;color:#6d6d6d">1/21/2013 2:39 AM</div>
<div class="t" style="left:558px;top:922px;color:#6d6d6d">JPEG image</div>
<div class="t" style="left:664px;width:80px;text-align:right;top:922px;color:#6d6d6d">17 KB</div>
<div class="a" style="left:175px;top:939px;width:573px;height:21px;background:#f0f0f0;border:1px solid #dadada"></div>
<svg class="a" style="left:178px;top:943px" width="16" height="14"><rect x=".5" y=".5" width="15" height="13" fill="#eef6f9" stroke="#8aa3b0"/><rect x="2" y="2" width="12" height="5" fill="#b4d9e6"/><path d="M2 12V8c4-2 7 1 12-1v5z" fill="#2f7a8f"/></svg>
<div class="t" style="left:198px;top:943px">picture239</div>
<div class="t" style="left:438px;top:943px;color:#6d6d6d">1/21/2013 2:40 AM</div>
<div class="t" style="left:558px;top:943px;color:#6d6d6d">JPEG image</div>
<div class="t" style="left:664px;width:80px;text-align:right;top:943px;color:#6d6d6d">122 KB</div>
<!-- header -->
<div class="a" style="left:160px;top:84px;width:1100px;height:25px;background:#fff"></div><div class="a" style="left:160px;top:84px;width:592px;height:25px;border-top:1px solid #e5e5e5;border-bottom:1px solid #e5e5e5"></div>
<div class="a" style="left:431px;top:85px;width:1px;height:23px;background:#e5e5e5"></div>
<div class="a" style="left:551px;top:85px;width:1px;height:23px;background:#e5e5e5"></div>
<div class="a" style="left:671px;top:85px;width:1px;height:23px;background:#e5e5e5"></div>
<div class="a" style="left:751px;top:85px;width:1px;height:23px;background:#e5e5e5"></div>
<svg class="a" style="left:296px;top:84px" width="12" height="6"><path d="M1.5 5h8L5.5 1z" fill="#555"/></svg>
<div class="t" style="left:177px;top:90px;color:#4c607a">Name</div>
<div class="t" style="left:438px;top:90px;color:#4c607a">Date modified</div>
<div class="t" style="left:558px;top:90px;color:#4c607a">Type</div>
<div class="t" style="left:678px;top:90px;color:#4c607a">Size</div>

<!-- infopath window -->

<div class="a" style="left:250px;top:215px;width:713px;height:548px;background:#fff;border:1px solid #4a4652;box-shadow:0 0 6px 1px rgba(110,90,160,0.45)"></div>
<!-- title row icons -->
<svg class="a" style="left:258px;top:220px" width="200" height="22">
 <path d="M3 4l9-2v18l-9-2z" fill="#7a3d96"/><rect x="6" y="8" width="2" height="7" fill="#fff"/><path d="M12 6h4v10h-4" fill="none" stroke="#7a3d96" stroke-width="1.6"/><path d="M16 13V3M14 5l2-2 2 2" fill="none" stroke="#7a3d96" stroke-width="1.4"/>
 <rect x="33" y="3" width="14" height="14" fill="#7a3d96"/><rect x="36" y="4" width="8" height="5" fill="#fff"/><rect x="36" y="12" width="8" height="5" fill="#fff"/><rect x="39" y="13" width="2" height="4" fill="#7a3d96"/>
 <circle cx="71" cy="12" r="5.5" fill="#aaa"/><path d="M71 9v6" stroke="#fff" stroke-width="1.5"/><path d="M65 3l3 3" stroke="#aaa" stroke-width="1.2"/>
 <path d="M92 8h6a4.5 4.5 0 0 1 0 9h-2" fill="none" stroke="#4b7bb0" stroke-width="2"/><path d="M90 8l4-4M90 8l4 4" stroke="#4b7bb0" stroke-width="2" fill="none"/>
 <path d="M132 8h-6a4.5 4.5 0 0 0 0 9h2" fill="none" stroke="#aaa" stroke-width="2"/><path d="M134 8l-4-4M134 8l-4 4" stroke="#aaa" stroke-width="2" fill="none"/>
 <circle cx="153" cy="7" r="4" fill="none" stroke="#666" stroke-width="1.6"/><path d="M156 10l4 4" stroke="#666" stroke-width="2"/><path d="M149 14l3 3 3-3" stroke="#3a9a7a" stroke-width="1.8" fill="none"/><circle cx="161" cy="7" r="1" fill="#666"/>
 <rect x="175" y="8" width="7" height="1.2" fill="#555"/><path d="M175 11h7l-3.5 3.5z" fill="#555"/>
</svg>
<div class="t" style="left:466px;top:223px;font-size:12px;color:#444">(Design) DonDatHang - InfoPath (Trial)</div>
<div class="a" style="left:699px;top:215px;width:79px;height:53px;background:#fdf8e2"></div>
<div class="a" style="left:699px;top:215px;width:79px;height:4px;background:#e9c64c"></div>
<div class="t" style="left:705px;top:224px;font-size:10.5px;color:#7a6b2c">TABLE TOOLS</div>
<div class="t" style="left:855px;top:222px;font-size:13px;font-weight:bold;color:#444">?</div>
<div class="a" style="left:883px;top:230px;width:10px;height:2px;background:#444"></div>
<div class="a" style="left:913px;top:225px;width:10px;height:9px;border:1px solid #444;border-top-width:2px"></div>
<svg class="a" style="left:941px;top:224px" width="12" height="12"><path d="M1 1l10 10M11 1l-10 10" stroke="#444" stroke-width="1.6"/></svg>
<!-- tabs -->
<div class="a" style="left:251px;top:244px;width:59px;height:24px;background:#6b3a96"></div>
<div class="t" style="left:270px;top:249px;font-size:11px;color:#fff">FILE</div>
<div class="a" style="left:314px;top:244px;width:62px;height:25px;background:#fff;border:1px solid #d4d4d4;border-bottom:none"></div>
<div class="t" style="left:327px;top:249px;font-size:11px;color:#5a4a6e">HOME</div>
<div class="t" style="left:391px;top:249px;font-size:11px;color:#444">INSERT</div>
<div class="t" style="left:458px;top:249px;font-size:10.5px;color:#444">PAGE DESIGN</div>
<div class="t" style="left:558px;top:249px;font-size:10.5px;color:#444">DATA</div>
<div class="t" style="left:619px;top:249px;font-size:10.5px;color:#444">DEVELOPER</div>
<div class="t" style="left:715px;top:249px;font-size:11px;color:#333">LAYOUT</div>
<svg class="a" style="left:913px;top:251px" width="10" height="8"><path d="M1 2h7L4.5 6z" fill="#666"/></svg>
<div class="a" style="left:928px;top:244px;width:24px;height:24px;background:#acacac;overflow:hidden"><div class="a" style="left:7px;top:3px;width:10px;height:11px;border-radius:50%;background:#fff"></div><div class="a" style="left:3px;top:15px;width:18px;height:14px;border-radius:8px 8px 0 0;background:#fff"></div></div>
<!-- ribbon body -->
<div class="a" style="left:251px;top:268px;width:711px;height:94px;background:#fff;border-top:1px solid #d4d4d4;border-bottom:1px solid #d4d4d4"></div>
<div class="a" style="left:376px;top:268px;width:585px;height:1px;background:#d4d4d4"></div>
<div class="a" style="left:315px;top:268px;width:60px;height:1px;background:#fff"></div>
<!-- clipboard -->
<svg class="a" style="left:262px;top:274px" width="60" height="66">
 <rect x="2" y="5" width="24" height="25" fill="#efc880"/><rect x="9" y="2" width="10" height="6" rx="2" fill="#666"/><path d="M5 6h18" stroke="#666" stroke-width="2"/>
 <path d="M14 12h9l5 5v15H14z" fill="#fff" stroke="#444" stroke-width="1"/><path d="M23 12v5h5" fill="none" stroke="#444" stroke-width="1"/>
 <circle cx="42" cy="13" r="3" fill="none" stroke="#aaa" stroke-width="1.4"/><circle cx="50" cy="13" r="3" fill="none" stroke="#aaa" stroke-width="1.4"/><path d="M43 10l8-9M49 10l-8-9" stroke="#aaa" stroke-width="1.4"/>
 <rect x="38" y="25" width="8" height="10" fill="#fff" stroke="#999" stroke-width=".9"/><rect x="43" y="28" width="9" height="11" fill="#fff" stroke="#999" stroke-width=".9"/>
 <path d="M39 62l9-9" stroke="#d9b861" stroke-width="5"/><path d="M47 54l5-5" stroke="#555" stroke-width="3"/>
 <path d="M10 58h6l-3 3z" fill="#666"/>
</svg>
<div class="t" style="left:262px;top:311px;font-size:12px;color:#444">Paste</div>
<div class="t" style="left:261px;top:346px;font-size:11.5px;color:#666">Clipboard</div>
<div class="a" style="left:323px;top:272px;width:1px;height:86px;background:#e2e2e2"></div>
<!-- format text -->
<div class="a" style="left:328px;top:272px;width:113px;height:23px;border:1px solid #bdbdbd;background:#fff"></div>
<div class="t" style="left:332px;top:277px;font-size:12px;color:#222">Calibri</div>
<svg class="a" style="left:429px;top:281px" width="8" height="6"><path d="M0 1h7L3.5 4.5z" fill="#555"/></svg>
<div class="a" style="left:440px;top:272px;width:41px;height:23px;border:1px solid #bdbdbd;background:#fff"></div>
<div class="t" style="left:444px;top:277px;font-size:12px;color:#222">10</div>
<svg class="a" style="left:469px;top:281px" width="8" height="6"><path d="M0 1h7L3.5 4.5z" fill="#555"/></svg>
<svg class="a" style="left:484px;top:275px" width="30" height="18"><path d="M3 2v13M0 5l3-3 3 3M0 12l3 3 3-3" stroke="#555" stroke-width="1.2" fill="none"/><path d="M8 4h7M8 8h7M8 12h7" stroke="#555" stroke-width="1.3"/><path d="M19 8h6l-3 3z" fill="#666"/></svg>
<div class="t" style="left:333px;top:298px;font-size:13px;font-weight:bold;color:#333">B</div>
<div class="t" style="left:357px;top:298px;font-size:13px;font-style:italic;color:#333;font-family:'Liberation Serif',serif">I</div>
<div class="t" style="left:378px;top:298px;font-size:13px;font-weight:bold;text-decoration:underline;color:#333">U</div>
<svg class="a" style="left:394px;top:303px" width="8" height="6"><path d="M0 1h7L3.5 4.5z" fill="#666"/></svg>
<svg class="a" style="left:415px;top:296px" width="70" height="22"><text x="2" y="10" font-size="9" fill="#444" font-family="Liberation Sans">ab</text><path d="M8 13l9-9" stroke="#666" stroke-width="2.5"/><rect x="2" y="14" width="16" height="4" rx="2" fill="#f0f020"/><path d="M24 8h6l-3 3z" fill="#666"/>
 <text x="37" y="15" font-size="14" fill="#333" font-family="Liberation Sans">A</text><rect x="37" y="15" width="16" height="3" fill="#d41818"/><path d="M58 8h6l-3 3z" fill="#666"/></svg>
<div class="a" style="left:487px;top:298px;width:1px;height:18px;background:#e2e2e2"></div>
<svg class="a" style="left:494px;top:296px" width="20" height="20"><text x="2" y="12" font-size="11" fill="#555" font-family="Liberation Sans">A</text><path d="M8 15l8-7" stroke="#e48a9a" stroke-width="5"/></svg>
<div class="a" style="left:328px;top:318px;width:22px;height:23px;background:#cbbcdc"></div>
<svg class="a" style="left:328px;top:318px" width="70" height="23"><path d="M4 7h13M4 11h9M4 15h13M4 19h9" stroke="#444" stroke-width="1.3"/>
 <path d="M27 7h13M29 11h9M27 15h13M29 19h9" stroke="#444" stroke-width="1.3"/>
 <path d="M48 7h13M52 11h9M48 15h13M52 19h9" stroke="#444" stroke-width="1.3"/></svg>
<div class="a" style="left:398px;top:320px;width:1px;height:18px;background:#e2e2e2"></div>
<svg class="a" style="left:404px;top:318px" width="90" height="23"><path d="M8 7h9M8 11h9M8 15h9M8 19h9" stroke="#444" stroke-width="1.3"/><path d="M1 13h6M1 13l3-3M1 13l3 3" stroke="#3a78b8" stroke-width="1.5" fill="none"/>
 <path d="M30 7h9M30 11h9M30 15h9M30 19h9" stroke="#444" stroke-width="1.3"/><path d="M23 13h6M29 13l-3-3M29 13l-3 3" stroke="#3a78b8" stroke-width="1.5" fill="none"/>
 <rect x="46" y="0" width="1" height="20" fill="#e2e2e2"/>
 <circle cx="57" cy="6" r="1.3" fill="#444"/><circle cx="57" cy="12" r="1.3" fill="#444"/><circle cx="57" cy="18" r="1.3" fill="#444"/><path d="M61 6h8M61 12h8M61 18h8" stroke="#444" stroke-width="1.3"/><path d="M75 11h6l-3 3z" fill="#666"/></svg>
<div class="t" style="left:390px;top:346px;font-size:11.5px;color:#666">Format Text</div>
<div class="a" style="left:518px;top:272px;width:1px;height:86px;background:#e2e2e2"></div>
<!-- font styles -->
<svg class="a" style="left:533px;top:275px" width="34" height="34"><text x="2" y="24" font-size="26" font-weight="bold" fill="#3d6faa" font-family="Liberation Sans">A</text><path d="M18 26l12-13" stroke="#666" stroke-width="3"/><path d="M14 30c2-6 6-6 8-3-3 3-5 3-8 3z" fill="#3d6faa"/></svg>
<div class="t" style="left:534px;top:311px;font-size:12px;color:#444">Quick</div>
<div class="t" style="left:530px;top:327px;font-size:12px;color:#444">Styles</div>
<svg class="a" style="left:563px;top:332px" width="8" height="6"><path d="M0 1h6L3 4z" fill="#666"/></svg>
<div class="t" style="left:522px;top:346px;font-size:11.5px;color:#666">Font Styles</div>
<div class="a" style="left:581px;top:272px;width:1px;height:86px;background:#e2e2e2"></div>
<div class="t" style="left:585px;top:346px;font-size:11.5px;color:#666">C</div>
<!-- controls (highlighted) -->
<div class="a" style="left:586px;top:266px;width:52px;height:78px;background:#cbbcdc;border:solid #e21c2a;border-width:4px 5px"></div>
<svg class="a" style="left:599px;top:276px" width="36" height="32"><rect x="10" y="2" width="10" height="4" rx="1" fill="none" stroke="#666" stroke-width="1.8"/><rect x="2" y="6" width="28" height="22" fill="#6a6a6a"/><path d="M2 12h28M2 18h20M2 23h20M8 6v22M16 6v22" stroke="#777" stroke-width=".6"/><path d="M2 15.5h18" stroke="#eee" stroke-width="1.2"/><rect x="14" y="13" width="5" height="5" fill="#fff"/><path d="M22 17v11" stroke="#2a62b0" stroke-width="3"/><path d="M20 15l2-3 2 3v3h-4z" fill="#2a62b0"/><path d="M28 17v11" stroke="#2a62b0" stroke-width="2"/><path d="M25.5 12v4h5v-4" fill="none" stroke="#2a62b0" stroke-width="1.6"/></svg>
<div class="a" style="left:591px;top:311px;width:42px;height:16px;overflow:hidden"><div class="t" style="left:1px;top:0;font-size:12px;color:#4a3d66">Controls</div></div>
<svg class="a" style="left:609px;top:331px" width="8" height="6"><path d="M0 1h7L3.5 4.5z" fill="#555"/></svg>
<div class="a" style="left:648px;top:272px;width:1px;height:86px;background:#e2e2e2"></div>
<!-- add rule / manage rules -->
<svg class="a" style="left:658px;top:276px" width="84" height="32">
 <rect x="2.5" y="1.5" width="26" height="26" fill="#fff" stroke="#777"/><rect x="6" y="6" width="19" height="3" fill="#bbb"/><rect x="6" y="12" width="19" height="5" fill="#fff" stroke="#d58a4a" stroke-width="2"/><rect x="6" y="20" width="19" height="3" fill="#bbb"/><path d="M27 14l-5 7h4l-3 8 7-9h-4l3-6z" fill="#f2b632"/>
 <path d="M50 4h24v4h2v4" fill="none" stroke="#888" stroke-width="1.2"/><path d="M48 7h24v5" fill="none" stroke="#888" stroke-width="1.2"/><rect x="46.5" y="10.5" width="26" height="13" fill="#fff" stroke="#777"/><rect x="50" y="14" width="18" height="5" fill="#fff" stroke="#d58a4a" stroke-width="2"/><rect x="46" y="23" width="27" height="6" fill="#fff" stroke="#777"/><path d="M73 23l4-3v6l-4 3z" fill="#777"/>
</svg>
<div class="t" style="left:663px;top:311px;font-size:12px;color:#444">Add</div>
<div class="t" style="left:658px;top:327px;font-size:12px;color:#444">Rule</div>
<svg class="a" style="left:683px;top:332px" width="8" height="6"><path d="M0 1h6L3 4z" fill="#666"/></svg>
<div class="t" style="left:697px;top:311px;font-size:12px;color:#444">Manage</div>
<div class="t" style="left:705px;top:327px;font-size:12px;color:#444">Rules</div>
<div class="a" style="left:747px;top:272px;width:1px;height:86px;background:#e2e2e2"></div>
<div class="a" style="left:754px;top:273px;width:30px;height:30px;border:1px solid #d8d8d8;background:#fff"></div>
<svg class="a" style="left:760px;top:281px" width="18" height="14"><path d="M2 12V5l2-3h2l1 3v7zM11 12V5l1-3h2l2 3v7z" fill="#333"/><rect x="6" y="5" width="6" height="3" fill="#333"/></svg>
<div class="t" style="left:751px;top:309px;font-size:12px;color:#444">Editing</div>
<svg class="a" style="left:765px;top:329px" width="8" height="6"><path d="M0 1h7L3.5 4.5z" fill="#666"/></svg>
<div class="a" style="left:791px;top:272px;width:1px;height:86px;background:#e2e2e2"></div>
<svg class="a" style="left:800px;top:274px" width="36" height="34"><path d="M9 6h13l6 6v18H9z" fill="#fff" stroke="#777"/><path d="M12 18h5M12 22h5M12 26h5" stroke="#777"/><circle cx="24" cy="23" r="6" fill="#fff" stroke="#555" stroke-width="2"/><path d="M28 27l5 5" stroke="#555" stroke-width="2.5"/><path d="M3 9l5 5 9-11" fill="none" stroke="#3a9a8a" stroke-width="3"/></svg>
<div class="t" style="left:798px;top:311px;font-size:12px;color:#444">Preview</div>
<div class="a" style="left:851px;top:272px;width:1px;height:86px;background:#ececec"></div>
<!-- canvas left strip of window -->
<div class="a" style="left:251px;top:362px;width:711px;height:361px;background:#fff"></div>

<!-- form canvas -->
<div class="a" style="left:273px;top:362px;width:653px;height:297px;border:1px solid #c8c8c8;border-top:none"></div>

<div class="a" style="left:372px;top:363px;width:0;height:8px;border-left:1px dashed #bbb"></div>
<div class="a" style="left:372px;top:365px;width:553px;height:0;border-top:1px solid #bbb"></div>
<div class="a" style="left:273px;top:371px;width:100px;height:0;border-top:1px dashed #999"></div><div class="a" style="left:373px;top:371px;width:553px;height:0;border-top:1px solid #a8a8a8"></div>
<div class="a" style="left:273px;top:408px;width:653px;height:0;border-top:1px dashed #aaa"></div>
<div class="a" style="left:273px;top:445px;width:653px;height:0;border-top:1px dashed #aaa"></div>
<div class="a" style="left:462px;top:371px;width:0;height:74px;border-left:1px dashed #aaa"></div>
<div class="a" style="left:485px;top:377px;width:460px;height:26px;border:1px solid #d6d6d6"></div>
<div class="a" style="left:485px;top:414px;width:460px;height:26px;border:1px solid #d6d6d6"></div>
<div class="t" style="left:296px;top:378px;font-size:16px;line-height:19px;color:#222">Nhân Viên đề nghi</div>
<div class="t" style="left:296px;top:415px;font-size:16px;line-height:19px;color:#222">Giám Đốc Nhà Máy</div>
<svg class="a" style="left:296px;top:396px" width="140" height="4"><path d="M0 2q1.5-2 3 0t3 0 3 0 3 0 3 0 3 0 3 0 3 0 3 0 3 0 3 0 3 0 3 0 3 0 3 0 3 0 3 0 3 0 3 0 3 0 3 0 3 0 3 0 3 0 3 0 3 0 3 0 3 0 3 0 3 0 3 0 3 0 3 0 3 0 3 0" fill="none" stroke="#d43c3c" stroke-width=".9"/></svg>
<svg class="a" style="left:296px;top:433px" width="140" height="4"><path d="M0 2q1.5-2 3 0t3 0 3 0 3 0 3 0 3 0 3 0 3 0 3 0 3 0 3 0 3 0 3 0 3 0 3 0 3 0 3 0 3 0 3 0 3 0 3 0 3 0 3 0 3 0 3 0 3 0 3 0 3 0 3 0 3 0 3 0 3 0 3 0 3 0 3 0 3 0" fill="none" stroke="#d43c3c" stroke-width=".9"/></svg>
<div class="a" style="left:260px;top:448px;width:13px;height:13px;border:1px solid #333;background:#eee"></div>
<div class="a" style="left:273px;top:461px;width:653px;height:32px;background:#e3e9e9;border-top:1px solid #c9d4d4;border-bottom:1px solid #c9d4d4"></div>
<div class="t" style="left:296px;top:466px;font-size:18px;line-height:22px;font-weight:bold;color:#5a8797">Yêu Cầu Nhà Máy Sản Xuất Các Sản Phẩm</div>
<svg class="a" style="left:296px;top:486px" width="300" height="4"><path d="M0 2q1.5-2 3 0t3 0 3 0 3 0 3 0 3 0 3 0 3 0 3 0 3 0 3 0 3 0 3 0 3 0 3 0 3 0 3 0 3 0 3 0 3 0 3 0 3 0 3 0 3 0 3 0 3 0 3 0 3 0 3 0 3 0 3 0 3 0 3 0 3 0 3 0 3 0 3 0 3 0 3 0 3 0 3 0 3 0 3 0 3 0 3 0 3 0 3 0 3 0 3 0 3 0 3 0 3 0 3 0 3 0 3 0 3 0 3 0 3 0 3 0 3 0 3 0 3 0 3 0 3 0 3 0 3 0 3 0 3 0 3 0 3 0 3 0 3 0 3 0 3 0 3 0 3 0 3 0 3 0 3 0 3 0 3 0 3 0 3 0 3 0 3 0 3 0 3 0 3 0 3 0 3 0 3 0 3 0 3 0" fill="none" stroke="#d43c3c" stroke-width=".9"/></svg>
<div class="a" style="left:273px;top:493px;width:0;height:67px;border-left:1px dashed #aaa"></div>
<div class="a" style="left:297px;top:497px;width:630px;height:44px;border:1px solid #c6c6c6;border-left:1px dashed #aaa;background:#fff"></div>
<div class="a" style="left:298px;top:498px;width:628px;height:20px;background:#ececec"></div>
<div class="a" style="left:304px;top:519px;width:620px;height:19px;border:1px solid #d9d9d9"></div>
<div class="a" style="left:297px;top:541px;width:105px;height:16px;border:1px solid #d0d0d0;border-top:none;background:#fff"></div>
<svg class="a" style="left:301px;top:544px" width="10" height="10"><rect x="0" y="0" width="10" height="10" fill="#3a78c0"/><path d="M2 4h6L5 7z" fill="#fff"/></svg>
<div class="t" style="left:314px;top:542px;font-size:11px;color:#b8b8b8">Repeating Table</div>
<div class="a" style="left:273px;top:560px;width:653px;height:0;border-top:1px dashed #aaa"></div>
<div class="a" style="left:273px;top:591px;width:653px;height:0;border-top:1px dashed #aaa"></div>
<div class="a" style="left:273px;top:622px;width:653px;height:0;border-top:1px dashed #aaa"></div>
<div class="a" style="left:527px;top:560px;width:0;height:62px;border-left:1px dashed #aaa"></div>
<div class="a" style="left:534px;top:566px;width:400px;height:19px;border:1px solid #d9d9d9"></div>
<div class="t" style="left:296px;top:567px;font-size:16px;line-height:19px;font-style:italic;color:#222">Ngày Giao Hàng</div>
<svg class="a" style="left:296px;top:585px" width="122" height="4"><path d="M0 2q1.5-2 3 0t3 0 3 0 3 0 3 0 3 0 3 0 3 0 3 0 3 0 3 0 3 0 3 0 3 0 3 0 3 0 3 0 3 0 3 0 3 0 3 0 3 0 3 0 3 0 3 0 3 0 3 0 3 0 3 0 3 0 3 0 3 0 3 0 3 0 3 0 3 0 3 0" fill="none" stroke="#d43c3c" stroke-width=".9"/></svg>
<div class="t" style="left:296px;top:598px;font-size:16px;line-height:19px;color:#222">Ý Kiến của Giám Đốc Nhà Máy</div>
<svg class="a" style="left:296px;top:616px" width="222" height="4"><path d="M0 2q1.5-2 3 0t3 0 3 0 3 0 3 0 3 0 3 0 3 0 3 0 3 0 3 0 3 0 3 0 3 0 3 0 3 0 3 0 3 0 3 0 3 0 3 0 3 0 3 0 3 0 3 0 3 0 3 0 3 0 3 0 3 0 3 0 3 0 3 0 3 0 3 0 3 0 3 0 3 0 3 0 3 0 3 0 3 0 3 0 3 0 3 0 3 0 3 0 3 0 3 0 3 0 3 0 3 0 3 0 3 0 3 0 3 0 3 0 3 0 3 0 3 0 3 0 3 0 3 0 3 0 3 0 3 0 3 0 3 0 3 0 3 0 3 0 3 0" fill="none" stroke="#d43c3c" stroke-width=".9"/></svg>
<div class="a" style="left:448px;top:624px;width:149px;height:33px;border:1px solid #8a8a8a;background:linear-gradient(#f6f6f6,#dcdcdc)"></div>
<div class="t" style="left:448px;top:631px;width:149px;text-align:center;font-size:16px;line-height:19px;font-weight:bold;color:#222">Nhận Phiếu</div>
<div class="a" style="left:600px;top:624px;width:150px;height:33px;border:1px solid #8a8a8a;background:linear-gradient(#f6f6f6,#dcdcdc)"></div>
<div class="t" style="left:600px;top:631px;width:150px;text-align:center;font-size:16px;line-height:19px;font-weight:bold;color:#222">Từ Chối</div>
<!-- scrollbars -->
<div class="a" style="left:945px;top:362px;width:17px;height:361px;background:#f6f6f6"></div>
<svg class="a" style="left:945px;top:694px" width="16" height="14"><path d="M3 4l5 5 5-5" fill="none" stroke="#c8c8c8" stroke-width="1.5"/></svg>
<div class="a" style="left:251px;top:723px;width:711px;height:17px;background:#f0f0f0"></div>
<div class="a" style="left:285px;top:724px;width:623px;height:14px;background:#cdcdcd"></div>
<svg class="a" style="left:265px;top:723px" width="16" height="16"><path d="M10 3l-5 5 5 5" fill="none" stroke="#555" stroke-width="2.4"/></svg>
<svg class="a" style="left:916px;top:723px" width="16" height="16"><path d="M5 3l5 5-5 5" fill="none" stroke="#555" stroke-width="2.4"/></svg>
<div class="a" style="left:251px;top:740px;width:711px;height:22px;background:#68358a"></div>

<!-- controls dropdown menu -->
<div class="a" style="left:588px;top:339px;width:386px;height:295px;background:rgba(0,0,0,0.08);filter:blur(2px)"></div>
<div class="a" style="left:590px;top:341px;width:381px;height:290px;background:#fff;border:1px solid #c6c6c6"></div>
<div class="a" style="left:591px;top:343px;width:361px;height:22px;background:#ebebeb"></div>
<div class="t" style="left:600px;top:348px;font-size:12px;font-weight:bold;color:#666">Input</div>
<div class="a" style="left:591px;top:466px;width:361px;height:22px;background:#ebebeb"></div>
<div class="t" style="left:600px;top:471px;font-size:12px;font-weight:bold;color:#666">Objects</div>
<div class="a" style="left:591px;top:529px;width:361px;height:23px;background:#ebebeb"></div>
<div class="t" style="left:600px;top:534px;font-size:12px;font-weight:bold;color:#666">Containers</div>
<div class="a" style="left:714px;top:366px;width:117px;height:19px;background:#e3dcee"></div>
<div class="a" style="left:710px;top:361px;width:111px;height:29px;border:3.5px solid #e01e2a"></div>
<div class="a" style="left:591px;top:592px;width:379px;height:1px;background:#e4e4e4"></div>
<div class="t" style="left:623px;top:598px;font-size:12px;color:#555">Add or Remove Custom Controls</div>
<svg class="a" style="left:958px;top:617px" width="10" height="10"><g fill="#999"><rect x="6" y="2" width="1.5" height="1.5"/><rect x="6" y="6" width="1.5" height="1.5"/><rect x="2" y="6" width="1.5" height="1.5"/></g></svg>
<div class="a" style="left:586px;top:340px;width:52px;height:4px;background:#e21c2a"></div>
<!-- items col1 -->
<div class="t" style="left:615px;top:369px;font-size:12px;color:#555">Text Box</div>
<div class="t" style="left:615px;top:389px;font-size:12px;color:#555">Combo Box</div>
<div class="t" style="left:615px;top:409px;font-size:12px;color:#555">Date Picker</div>
<div class="t" style="left:615px;top:429px;font-size:12px;color:#555">List Box</div>
<div class="t" style="left:615px;top:449px;font-size:12px;color:#555">Plain List</div>
<div class="t" style="left:615px;top:492px;font-size:12px;color:#555">Button</div>
<div class="t" style="left:615px;top:512px;font-size:12px;color:#555">File Attachment</div>
<div class="t" style="left:615px;top:555px;font-size:12px;color:#555">Section</div>
<div class="t" style="left:615px;top:575px;font-size:12px;color:#555">Repeating Table</div>
<!-- col2 -->
<div class="t" style="left:735px;top:369px;font-size:12px;color:#555">Rich Text Box</div>
<div class="t" style="left:735px;top:389px;font-size:12px;color:#555">Check Box</div>
<div class="t" style="left:735px;top:409px;font-size:12px;color:#555">Date and Time ...</div>
<div class="t" style="left:735px;top:429px;font-size:12px;color:#555">Bulleted List</div>
<div class="t" style="left:735px;top:449px;font-size:12px;color:#555">Person/Group P...</div>
<div class="t" style="left:735px;top:492px;font-size:12px;color:#555">Picture Button</div>
<div class="t" style="left:735px;top:512px;font-size:12px;color:#555">Picture</div>
<div class="t" style="left:735px;top:555px;font-size:12px;color:#555">Optional Section</div>
<div class="t" style="left:735px;top:575px;font-size:12px;color:#555">Choice Group</div>
<!-- col3 -->
<div class="t" style="left:855px;top:369px;font-size:12px;color:#555">Drop-Down List...</div>
<div class="t" style="left:855px;top:389px;font-size:12px;color:#555">Option Button</div>
<div class="t" style="left:855px;top:409px;font-size:12px;color:#555">Multiple-Selecti...</div>
<div class="t" style="left:855px;top:429px;font-size:12px;color:#555">Numbered List</div>
<div class="t" style="left:855px;top:449px;font-size:12px;color:#555">External Item Pi...</div>
<div class="t" style="left:855px;top:492px;font-size:12px;color:#555">Calculated Value</div>
<div class="t" style="left:855px;top:512px;font-size:12px;color:#555">Hyperlink</div>
<div class="t" style="left:855px;top:555px;font-size:12px;color:#555">Repeating Secti...</div>
<div class="t" style="left:855px;top:575px;font-size:12px;color:#555">Choice Section</div>
<!-- icons col1 -->
<svg class="a" style="left:593px;top:366px" width="20" height="230">
 <rect x="1.5" y="2.5" width="15" height="13" fill="#fff" stroke="#555"/><text x="2.5" y="13" font-size="9" fill="#333" font-family="Liberation Sans">ab</text><path d="M13.5 4.5v9" stroke="#333"/>
 <rect x="1.5" y="23.5" width="15" height="11" fill="#fff" stroke="#666"/><rect x="10" y="24" width="7" height="11" fill="#3a78c0"/><path d="M11.5 28h4l-2 2.5z" fill="#fff"/><path d="M4 26h3M5.5 26v6M4 32h3" stroke="#555" stroke-width=".8"/>
 <rect x="1.5" y="42.5" width="15" height="14" fill="#fff" stroke="#555"/><rect x="1.5" y="42.5" width="15" height="3" fill="#666"/><path d="M1.5 49h15M1.5 53h15M5.5 45v12M9.5 45v12M13 45v12" stroke="#888" stroke-width=".8"/>
 <rect x="1.5" y="63.5" width="15" height="13" fill="#fff" stroke="#555"/><path d="M4 67h5M4 70h5M4 73h5" stroke="#777" stroke-width=".9"/><path d="M11 64v12" stroke="#555"/><path d="M12 68l1.5-2 1.5 2M12 72l1.5 2 1.5-2" stroke="#555" fill="none" stroke-width=".9"/>
 <path d="M4 84h10M4 87h10" stroke="#666"/><rect x="4" y="89" width="10" height="7" fill="#3a78c0"/><path d="M6.5 91h5l-2.5 3z" fill="#fff"/>
 <rect x="1.5" y="128.5" width="15" height="9" rx="1" fill="#fff" stroke="#555"/>
 <path d="M8 148v7a2.5 2.5 0 0 0 5 0v-8a1.7 1.7 0 0 0-3.4 0v7" fill="none" stroke="#777" stroke-width="1"/>
 <rect x="2.5" y="189.5" width="13" height="13" fill="#fff" stroke="#555"/><rect x="5.5" y="192.5" width="7" height="7" fill="#fff" stroke="#888"/><rect x="1" y="188" width="3" height="3" fill="#555"/><rect x="14" y="188" width="3" height="3" fill="#555"/><rect x="1" y="201" width="3" height="3" fill="#555"/><rect x="14" y="201" width="3" height="3" fill="#555"/>
 <rect x="1.5" y="208.5" width="15" height="12" fill="#fff" stroke="#555"/><path d="M1.5 212h15M6 209v12M11 209v12" stroke="#888" stroke-width=".8"/><rect x="5" y="214" width="9" height="6" fill="#3a78c0"/><path d="M7 216h5l-2.5 2.5z" fill="#fff"/>
</svg>
<!-- icons col2 -->
<svg class="a" style="left:713px;top:366px" width="20" height="230">
 <circle cx="4" cy="4" r="3" fill="#8a8aa0"/><path d="M2 9h12M2 12h12M2 15h9" stroke="#7a8aa8" stroke-width="1"/><path d="M9 17l5-12 2 1-5 12z" fill="#5b7fb8"/>
 <rect x="2.5" y="22.5" width="14" height="14" fill="#fff" stroke="#888"/><path d="M5 29l3 3 6-7" fill="none" stroke="#2a6ab8" stroke-width="2"/>
 <rect x="1.5" y="42.5" width="13" height="11" fill="#fff" stroke="#777"/><rect x="1.5" y="42.5" width="13" height="2.5" fill="#8a7a6a"/><path d="M4 48h4M4 51h4" stroke="#999"/><circle cx="13" cy="55" r="4.5" fill="#fff" stroke="#3a6fb0" stroke-width="1.2"/><path d="M13 52v3h2" stroke="#3a6fb0" fill="none"/>
 <circle cx="3" cy="64" r="1.3" fill="#3a78c0"/><circle cx="3" cy="69" r="1.3" fill="#3a78c0"/><circle cx="3" cy="74" r="1.3" fill="#3a78c0"/><path d="M7 64h10M7 69h10" stroke="#555"/><rect x="7" y="71" width="10" height="7" fill="#3a78c0"/><path d="M9.5 73h5l-2.5 3z" fill="#fff"/>
 <circle cx="6" cy="85" r="2.5" fill="#3a78c0"/><path d="M1 94a5 4 0 0 1 10 0z" fill="#3a78c0"/><circle cx="13" cy="84" r="2.5" fill="#4a9a8a"/><path d="M9 92a4.5 4 0 0 1 9 0z" fill="#4a9a8a"/>
 <rect x="2.5" y="131.5" width="8" height="6" fill="#ccc"/><rect x="5.5" y="125.5" width="11" height="9" fill="#fff" stroke="#777"/><path d="M7 133l3-3 2 2 3-2v3z" fill="#3a78c0"/>
 <rect x="2.5" y="145.5" width="13" height="13" fill="#fff" stroke="#555"/><path d="M4 157l4-5 3 3 3-2v4z" fill="#3a78c0"/><rect x="1" y="144" width="3" height="3" fill="#555"/><rect x="14" y="144" width="3" height="3" fill="#555"/><rect x="1" y="157" width="3" height="3" fill="#555"/><rect x="14" y="157" width="3" height="3" fill="#555"/>
 <rect x="2.5" y="189.5" width="13" height="13" fill="#fff" stroke="#555"/><circle cx="9" cy="196" r="4.5" fill="#f0a030" stroke="#c07010"/><path d="M7 196h4M9 194l-2 2 2 2" stroke="#fff" fill="none"/><rect x="1" y="188" width="3" height="3" fill="#555"/><rect x="14" y="188" width="3" height="3" fill="#555"/><rect x="1" y="201" width="3" height="3" fill="#555"/><rect x="14" y="201" width="3" height="3" fill="#555"/>
 <rect x="2.5" y="209.5" width="13" height="13" fill="#fff" stroke="#555"/><rect x="5" y="212" width="8" height="8" fill="#7a4aa8"/><rect x="6.5" y="213.5" width="3" height="3" fill="none" stroke="#fff" stroke-width=".8"/><rect x="8.5" y="215.5" width="3" height="3" fill="none" stroke="#fff" stroke-width=".8"/><rect x="1" y="208" width="3" height="3" fill="#555"/><rect x="14" y="208" width="3" height="3" fill="#555"/><rect x="1" y="221" width="3" height="3" fill="#555"/><rect x="14" y="221" width="3" height="3" fill="#555"/>
</svg>
<!-- icons col3 -->
<svg class="a" style="left:833px;top:366px" width="20" height="230">
 <rect x="1.5" y="2.5" width="15" height="15" fill="#fff" stroke="#555"/><path d="M4 6h6M4 9h6M4 12h6M4 15h6" stroke="#777" stroke-width=".9"/><path d="M12 3v14" stroke="#666"/><path d="M13 6h2l-1 1.5zM13 13h2l-1 1.5z" fill="#555"/>
 <circle cx="9" cy="30" r="5" fill="#fff" stroke="#666"/><circle cx="9" cy="30" r="2.2" fill="#555"/>
 <rect x="1.5" y="42.5" width="15" height="15" fill="#fff" stroke="#555"/><path d="M3 46l1.5 1.5 2.5-2.5M3 51l1.5 1.5 2.5-2.5M3 56l1.5 1.5" stroke="#555" fill="none" stroke-width=".9"/><path d="M9 47h6M9 52h6M9 56h6" stroke="#666"/>
 <text x="1" y="69" font-size="6" fill="#555" font-family="Liberation Sans">1</text><text x="1" y="74" font-size="6" fill="#555" font-family="Liberation Sans">2</text><text x="1" y="79" font-size="6" fill="#555" font-family="Liberation Sans">3</text><path d="M7 64h10M7 69h10" stroke="#555"/><rect x="7" y="71" width="10" height="7" fill="#3a78c0"/><path d="M9.5 73h5l-2.5 3z" fill="#fff"/>
 <rect x="2.5" y="81.5" width="9" height="12" fill="#fff" stroke="#777"/><rect x="9" y="87" width="8" height="9" fill="#e8c060"/><path d="M0 86h4l-1.5-1.5M0 86l1.5 1.5" stroke="#3a78c0" fill="none"/>
 <text x="1" y="137" font-size="14" font-style="italic" fill="#444" font-family="Liberation Serif">fx</text>
 <circle cx="8" cy="147" r="5" fill="#fff" stroke="#555"/><path d="M3 147h10M8 142v10" stroke="#777" stroke-width=".8"/><rect x="4" y="151" width="7" height="4" rx="2" fill="none" stroke="#2a6ab8" stroke-width="1.3"/><rect x="9" y="151" width="7" height="4" rx="2" fill="none" stroke="#2a6ab8" stroke-width="1.3"/>
 <rect x="2.5" y="189.5" width="13" height="13" fill="#fff" stroke="#555"/><rect x="5" y="192" width="8" height="8" fill="#3a78c0"/><path d="M6.5 195h5l-2.5 3z" fill="#fff"/><rect x="1" y="188" width="3" height="3" fill="#555"/><rect x="14" y="188" width="3" height="3" fill="#555"/><rect x="1" y="201" width="3" height="3" fill="#555"/><rect x="14" y="201" width="3" height="3" fill="#555"/>
 <rect x="5" y="211" width="8" height="8" fill="#7a4aa8"/><rect x="6.5" y="212.5" width="3" height="3" fill="none" stroke="#fff" stroke-width=".8"/><rect x="8.5" y="214.5" width="3" height="3" fill="none" stroke="#fff" stroke-width=".8"/>
</svg>
<div class="t" style="left:619px;top:524px;font-size:21px;line-height:21px;letter-spacing:3px;color:rgba(90,90,90,0.4);transform:rotate(-41deg);transform-origin:0 100%">CT.VN</div>

<!-- taskbar -->
<div class="a" style="left:0;top:984px;width:1280px;height:40px;background:#60c3e8;border-top:2px solid #2a6a8a;border-bottom:1px solid #3a7a9a"></div>
<div class="a" style="left:140px;top:985px;width:1px;height:39px;background:#2f6f8c"></div>
<div class="a" style="left:200px;top:985px;width:1px;height:39px;background:#2f6f8c"></div>
<div class="a" style="left:262px;top:985px;width:62px;height:39px;background:#8fd6f0;border-left:1px solid #2f6f8c;border-right:1px solid #2f6f8c"></div>
<div class="a" style="left:381px;top:985px;width:1px;height:39px;background:#2f6f8c"></div>
<div class="a" style="left:1274px;top:985px;width:1px;height:39px;background:#2f6f8c"></div>
<!-- server manager -->
<svg class="a" style="left:28px;top:986px" width="36" height="36"><rect x="3" y="2" width="14" height="8" fill="#2a7ad0" stroke="#e8f6ff" stroke-width="1.2"/><rect x="3" y="11" width="14" height="20" fill="#2a7ad0" stroke="#e8f6ff" stroke-width="1.2"/><rect x="8" y="19" width="25" height="15" rx="1" fill="#7a828a" stroke="#e8f6ff" stroke-width="1.2"/><path d="M11 24h19" stroke="#fff" stroke-width="1.4"/><path d="M16 19v-3h9v3" fill="none" stroke="#e8f6ff" stroke-width="1.2"/></svg>
<!-- powershell -->
<svg class="a" style="left:94px;top:991px" width="30" height="26"><path d="M6 2h22l-5 21H1z" fill="#2f78c8" stroke="#1a4f8a" stroke-width=".8"/><path d="M7 3h20l-1 5H6z" fill="#6aaee8"/><path d="M8 8l7 5-8 6" fill="none" stroke="#fff" stroke-width="2.2"/><path d="M19 6l4 0-3 16h-4z" fill="#1f5fa8" opacity=".6"/></svg>
<!-- explorer -->
<svg class="a" style="left:153px;top:988px" width="34" height="32"><rect x="1" y="2" width="32" height="28" fill="#f3d67a" stroke="#caa440"/><rect x="3" y="5" width="28" height="6" fill="#fbeaa8"/><rect x="9" y="16" width="16" height="14" fill="#7ab8e0" stroke="#fff"/><rect x="9" y="16" width="16" height="4" fill="#fff"/><circle cx="6" cy="4" r="1" fill="#d05a2a"/><circle cx="10" cy="4" r="1" fill="#3a8a3a"/></svg>
<!-- smiley app -->
<svg class="a" style="left:213px;top:987px" width="36" height="34"><rect x="4" y="2" width="28" height="28" rx="7" fill="#aab0b4" stroke="#333" stroke-width="1.5"/><ellipse cx="18" cy="15" rx="10" ry="9" fill="#2a9ad8" stroke="#222"/><path d="M10 15h16v6c-5 3-11 3-16 0z" fill="#fff" stroke="#333" stroke-width=".8"/><path d="M14 15v7M18 15v8M22 15v7M10 18h16" stroke="#333" stroke-width=".7"/><circle cx="14" cy="11" r="1.2" fill="#fff"/><circle cx="22" cy="11" r="1.2" fill="#fff"/><rect x="8" y="29" width="20" height="3" fill="#d8d8d8" stroke="#555" stroke-width=".6"/></svg>
<!-- infopath -->
<svg class="a" style="left:278px;top:988px" width="32" height="32"><path d="M1 4l16-3v30L1 28z" fill="#7d3e98"/><rect x="6" y="10" width="3" height="11" fill="#fff"/><path d="M17 9h6v15h-6" fill="none" stroke="#fff" stroke-width="2"/><path d="M23 18V4M20 7l3-3 3 3" fill="none" stroke="#fff" stroke-width="2"/></svg>
<!-- IE -->
<svg class="a" style="left:335px;top:987px" width="36" height="34"><circle cx="18" cy="18" r="11" fill="none" stroke="#2a9de0" stroke-width="5"/><path d="M9 18h19" stroke="#2a9de0" stroke-width="4"/><path d="M28 21h-9" stroke="#5dc1e6" stroke-width="3"/><path d="M5 27c-3-6 10-20 26-23 4-1 4 3 0 7" fill="none" stroke="#f2b92a" stroke-width="2.5"/></svg>
<!-- tray -->
<svg class="a" style="left:1064px;top:999px" width="12" height="8"><path d="M2 6h8L6 2z" fill="#0c2a3a"/></svg>
<svg class="a" style="left:1085px;top:994px" width="20" height="20"><path d="M3 2v17" stroke="#fff" stroke-width="1.6"/><path d="M3 3c4-2 6 2 10 0v7c-4 2-6-2-10 0z" fill="#fff" stroke="#444" stroke-width=".6"/><path d="M13 5h4l-2 3 2 3h-4" fill="#fff" stroke="#444" stroke-width=".6"/></svg>
<svg class="a" style="left:1110px;top:994px" width="20" height="20"><rect x="6" y="3" width="12" height="10" fill="none" stroke="#fff" stroke-width="2"/><path d="M8 6h8M8 9h8" stroke="#fff"/><circle cx="4" cy="5" r="3" fill="none" stroke="#fff" stroke-width="1.6"/><path d="M4 8v10M10 16h6M12 13v3" stroke="#fff" stroke-width="1.6"/></svg>
<svg class="a" style="left:1134px;top:994px" width="20" height="20"><path d="M2 7h3l5-4v14l-5-4H2z" fill="#fff" stroke="#666" stroke-width=".6"/><circle cx="13" cy="14" r="4.5" fill="#d9342a"/><path d="M11 12l4 4M15 12l-4 4" stroke="#fff" stroke-width="1.2"/></svg>
<div class="t" style="left:1165px;top:997px;font-size:12px;color:#0c2a3a">ENG</div>
<div class="t" style="left:1208px;top:988px;font-size:12px;color:#0c2a3a">2:43 AM</div>
<div class="t" style="left:1204px;top:1005px;font-size:12px;color:#0c2a3a">1/21/2013</div>

</body></html>
